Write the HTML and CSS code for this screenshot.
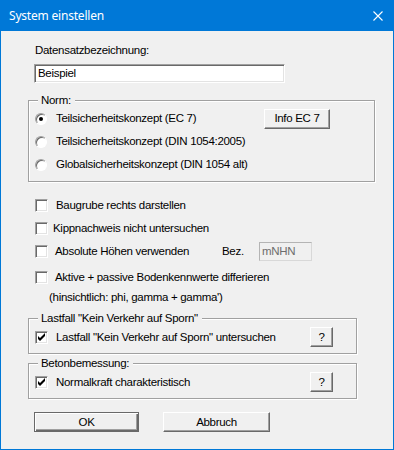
FILE: index.html
```html
<!DOCTYPE html>
<html lang="de">
<head>
    <meta charset="UTF-8">
    <title>System einstellen</title>
    <link rel="stylesheet" href="styles.css">
</head>
<body>
    <div class="window">
        <div class="titlebar">
            <span class="title">System einstellen</span>
            <svg class="close" width="10" height="10" viewBox="0 0 10 10">
                <path d="M0.5 0.5L9.5 9.5M9.5 0.5L0.5 9.5" stroke="#fff" stroke-width="1.1" fill="none"/>
            </svg>
        </div>

        <div class="content">
            <!-- Datensatz -->
            <div class="field-label">Datensatzbezeichnung:</div>
            <div class="textbox name-box">Beispiel</div>

            <!-- Norm -->
            <fieldset class="group norm">
                <legend>Norm:</legend>
                <div class="radio-row">
                    <span class="radio checked"></span>
                    <span>Teilsicherheitskonzept (EC 7)</span>
                    <button class="btn info-btn">Info EC 7</button>
                </div>
                <div class="radio-row">
                    <span class="radio"></span>
                    <span>Teilsicherheitskonzept (DIN 1054:2005)</span>
                </div>
                <div class="radio-row">
                    <span class="radio"></span>
                    <span>Globalsicherheitskonzept (DIN 1054 alt)</span>
                </div>
            </fieldset>

            <!-- Optionen -->
            <div class="options">
                <div class="check-row">
                    <span class="checkbox gap-8"></span>
                    <span>Baugrube rechts darstellen</span>
                </div>
                <div class="check-row">
                    <span class="checkbox gap-5"></span>
                    <span>Kippnachweis nicht untersuchen</span>
                </div>
                <div class="check-row">
                    <span class="checkbox"></span>
                    <span class="height-label">Absolute Höhen verwenden</span>
                    <span class="bez-label">Bez.</span>
                    <div class="textbox unit-box">mNHN</div>
                </div>
                <div class="check-row spaced">
                    <span class="checkbox"></span>
                    <span>Aktive + passive Bodenkennwerte differieren</span>
                </div>
                <div class="note">(hinsichtlich: phi, gamma + gamma')</div>
            </div>

            <!-- Lastfall -->
            <fieldset class="group narrow">
                <legend>Lastfall "Kein Verkehr auf Sporn"</legend>
                <div class="group-row">
                    <span class="checkbox gap-8">
                        <svg width="11" height="11" viewBox="0 0 11 11"><path d="M2 4L4 6L9 1V4L4 9L2 7Z" fill="#000"/></svg>
                    </span>
                    <span>Lastfall "Kein Verkehr auf Sporn" untersuchen</span>
                    <button class="btn help-btn">?</button>
                </div>
            </fieldset>

            <!-- Betonbemessung -->
            <fieldset class="group narrow beton">
                <legend>Betonbemessung:</legend>
                <div class="group-row">
                    <span class="checkbox gap-8">
                        <svg width="11" height="11" viewBox="0 0 11 11"><path d="M2 4L4 6L9 1V4L4 9L2 7Z" fill="#000"/></svg>
                    </span>
                    <span>Normalkraft charakteristisch</span>
                    <button class="btn help-btn">?</button>
                </div>
            </fieldset>

            <div class="actions">
                <button class="btn default ok-btn">OK</button>
                <button class="btn cancel-btn">Abbruch</button>
            </div>
        </div>
    </div>
</body>
</html>
```

FILE: styles.css
```css
* {
    box-sizing: border-box;
}

body {
    margin: 0;
    background: #f0f0f0;
    font-family: "Liberation Sans", Arial, sans-serif;
    font-size: 11.5px;
    letter-spacing: -0.3px;
    color: #000;
}

.window {
    width: 394px;
    height: 450px;
    display: flex;
    flex-direction: column;
}

.titlebar {
    height: 31px;
    background: #0078d7;
    color: #fff;
    display: flex;
    align-items: center;
    padding: 0 11px 0 9px;
}

.title {
    flex: 1;
    font-family: "Noto Sans", sans-serif;
    font-size: 12px;
    letter-spacing: -0.2px;
}

.content {
    flex: 1;
    border: 1px solid #0078d7;
    border-top: none;
    padding: 13px 0 0 27px;
    line-height: 13px;
}

.field-label {
    margin-left: 7px;
}

/* sunken edit fields */
.textbox {
    height: 19px;
    background: #fff;
    border: 1px solid;
    border-color: #a0a0a0 #fff #fff #a0a0a0;
    box-shadow: inset 1px 1px 0 #696969, inset -1px -1px 0 #e3e3e3;
    padding: 0 3px;
    line-height: 16px;
}

.name-box {
    width: 251px;
    margin: 7px 0 0 6px;
}

.unit-box {
    width: 53px;
    background: #f0f0f0;
    color: #6d6d6d;
    border-color: #b4b4b4 #d8d8d8 #d8d8d8 #b4b4b4;
    box-shadow: none;
    padding-left: 2px;
}

/* group boxes */
.group {
    margin: 0;
    padding: 0 0 5px 6px;
    min-width: 0;
    border: 1px solid #a0a0a0;
    box-shadow: 1px 1px 0 #fff, inset 1px 1px 0 #fff;
}

.group legend {
    margin-left: 3px;
    padding: 0 4px 0 3px;
    line-height: 13px;
    background: #f0f0f0;
}

.norm {
    width: 347px;
    margin-top: 11px;
}

.narrow {
    width: 329px;
    margin-top: 8px;
    padding-bottom: 6px;
}

.beton {
    margin-top: 3px;
}

.radio-row {
    display: flex;
    align-items: center;
    height: 23px;
}

.radio {
    width: 12px;
    height: 12px;
    margin-right: 9px;
    border-radius: 50%;
    background: #fff;
    border: 1px solid;
    border-color: #a0a0a0 #fff #fff #a0a0a0;
    box-shadow: inset 1px 1px 0 #696969;
    display: flex;
    align-items: center;
    justify-content: center;
}

.radio.checked::after {
    content: "";
    width: 4px;
    height: 4px;
    border-radius: 50%;
    background: #000;
}

.checkbox {
    width: 13px;
    height: 13px;
    flex-shrink: 0;
    margin-right: 7px;
    background: #fff;
    border: 1px solid;
    border-color: #a0a0a0 #fff #fff #a0a0a0;
    box-shadow: inset 1px 1px 0 #696969, inset -1px -1px 0 #e3e3e3;
}

.checkbox svg {
    display: block;
}

.gap-8 {
    margin-right: 8px;
}

.gap-5 {
    margin-right: 5px;
}

.options {
    margin-top: 12px;
}

.check-row {
    display: flex;
    align-items: center;
    height: 23px;
    margin-left: 7px;
}

.check-row.spaced {
    margin-top: 3px;
}

.height-label {
    width: 167px;
}

.bez-label {
    width: 37px;
}

.note {
    margin: 2px 0 0 21px;
}

.group-row {
    display: flex;
    align-items: center;
    height: 20px;
    margin-top: 2px;
}

/* raised buttons */
.btn {
    font: inherit;
    letter-spacing: inherit;
    color: #000;
    height: 20px;
    padding: 0;
    background: #f0f0f0;
    border: 1px solid;
    border-color: #fff #696969 #696969 #fff;
    box-shadow: inset -1px -1px 0 #a0a0a0;
}

.btn.default {
    border: 1px solid #696969;
    box-shadow: inset 1px 1px 0 #fff, inset -1px -1px 0 #696969, inset -2px -2px 0 #a0a0a0;
}

.info-btn {
    width: 66px;
    margin: 0 44px 0 auto;
}

.help-btn {
    width: 23px;
    margin: 0 23px 0 auto;
}

.actions {
    display: flex;
    gap: 24px;
    margin: 13px 0 0 6px;
}

.ok-btn {
    width: 105px;
}

.cancel-btn {
    width: 107px;
}
```
